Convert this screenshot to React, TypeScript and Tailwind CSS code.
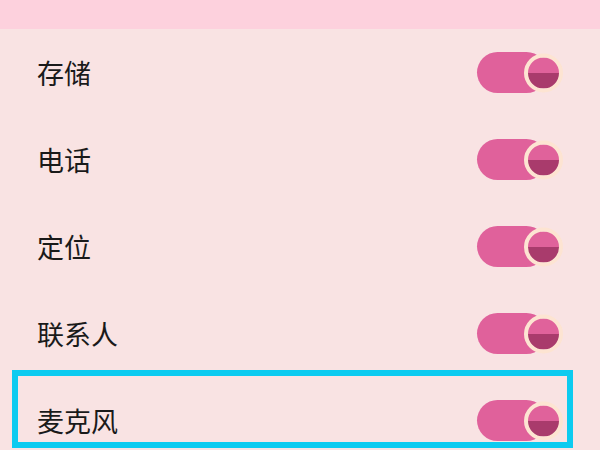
const ITEMS = ["存储", "电话", "定位", "联系人", "麦克风"];

function Toggle() {
  return (
    <div className="relative flex h-[42px] w-[86px] items-center">
      <div className="h-[41px] w-[70px] rounded-full bg-[#e0619b]" />
      <div className="absolute right-0 top-1/2 h-[39px] w-[39px] -translate-y-1/2 overflow-hidden rounded-full border-[4px] border-[#fde4d2] bg-[linear-gradient(to_bottom,#e0629b_50%,#a93b6c_50%)]" />
    </div>
  );
}

export default function App() {
  return (
    <main
      className="relative h-[450px] w-[600px] overflow-hidden bg-[#f9e3e3]"
      style={{ fontFamily: '"Noto Sans CJK SC", "Noto Sans", sans-serif' }}
    >
      <div className="h-[29px] bg-[#fdd1dd]" />
      <ul>
        {ITEMS.map((name, i) => (
          <li
            key={name}
            className="relative flex h-[87px] items-center justify-between pl-[37px] pr-[37px]"
          >
            <span className="text-[27px] leading-none text-[#1a1a1a]">{name}</span>
            <Toggle />
            {i === ITEMS.length - 1 && (
              <div className="absolute left-[12px] top-[-7px] h-[78px] w-[561px] border-[6px] border-[#0ccbf0]" />
            )}
          </li>
        ))}
      </ul>
    </main>
  );
}
